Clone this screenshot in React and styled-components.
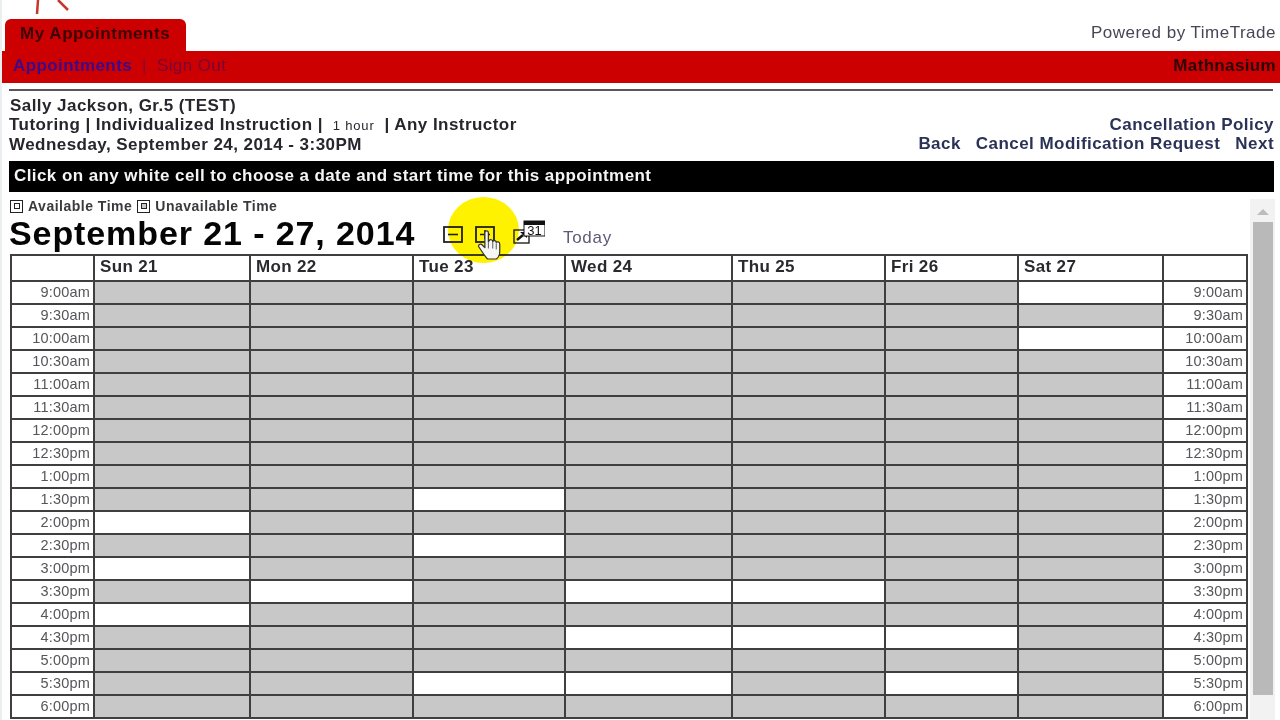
import React from 'react';
import styled, { createGlobalStyle } from 'styled-components';

const Global = createGlobalStyle`
  html, body { margin: 0; padding: 0; height: 720px; overflow: hidden; background: #fff; }
  body { font-family: "Liberation Sans", Arial, sans-serif; color: #111; }
`;
const Page = styled.div`
  position: relative; width: 1280px; height: 720px; overflow: hidden; background: #fff;
  border-left: 2px solid #eceff0; box-sizing: border-box;
`;
const Logo = styled.svg`position: absolute; left: 30px; top: 0; width: 45px; height: 18px;`;
const TopRow = styled.div`
  height: 51px; display: flex; align-items: flex-end; justify-content: space-between; padding-left: 3px; padding-right: 4px;
`;
const Tab = styled.div`
  width: 181px; height: 32px; box-sizing: border-box; background: #cc0000; border-radius: 6px 6px 0 0;
  padding: 5px 0 0 15px; font-size: 17px; font-weight: 700; letter-spacing: .55px; color: #3a0306;
`;
const Powered = styled.div`font-size: 17px; letter-spacing: .5px; color: #464656; padding-bottom: 8px;`;
const RedBar = styled.div`
  height: 32px; background: #cc0000; display: flex; align-items: center; justify-content: space-between; padding: 0 4px 3px 11px; box-sizing: border-box;
`;
const NavLinks = styled.div`display: flex; align-items: center; font-size: 17px; letter-spacing: .4px;`;
const NavLink = styled.span`color: ${p => p.$dim ? '#7c0338' : '#3c0a8a'}; font-weight: ${p => p.$dim ? 400 : 700};`;
const NavSep = styled.span`color: #8a0a30; font-weight: 400; margin: 0 10px;`;
const Org = styled.span`font-size: 17px; font-weight: 700; letter-spacing: .35px; color: #2c0308;`;
const Rule = styled.div`height: 2px; background: #58565c; margin: 6px 7px 0 7px;`;
const Info = styled.div`
  display: flex; justify-content: space-between; padding: 5px 6px 0 7px; height: 70px; box-sizing: border-box;
  font-size: 17px; letter-spacing: .45px; line-height: 19px; color: #26262c; font-weight: 700;
`;
const InfoLeft = styled.div`display: flex; flex-direction: column;`;
const InfoLine = styled.div`padding-left: ${p => p.$in || 0}px;`;
const Small = styled.span`font-size: 13px; font-weight: 400; letter-spacing: .8px; margin: 0 10px 0 10px;`;
const InfoRight = styled.div`display: flex; flex-direction: column; align-items: flex-end; padding-top: 19px; color: #2b3258;`;
const Actions = styled.div`display: flex; gap: 15px;`;
const Banner = styled.div`
  height: 31px; background: #000; color: #f4f4f4; margin: 0 6px 0 7px; padding: 0 5px 2px; display: flex; align-items: center; box-sizing: border-box;
  font-size: 17px; font-weight: 700; letter-spacing: .42px;
`;
const Content = styled.div`display: flex;`;
const Main = styled.div`width: 1238px; padding-left: 8px; flex: none;`;
const Legend = styled.div`
  display: flex; align-items: center; height: 14px; padding-top: 7px; font-size: 14px; font-weight: 700; letter-spacing: .5px; color: #3a3a3e;
`;
const LegendBox = styled.span`
  width: 13px; height: 13px; border: 1.5px solid #222; box-sizing: border-box; display: inline-flex; align-items: center; justify-content: center;
  margin-right: 5px; margin-left: ${p => p.$gap ? 5 : 0}px; background: #fff;
  &::after { content: ''; width: 6px; height: 6px; border: 1.5px solid #222; box-sizing: border-box; background: ${p => p.$gray ? '#c8c8c8' : '#fff'}; }
`;
const TitleRow = styled.div`display: flex; align-items: flex-end; height: 38px; margin-left: -1px;`;
const Title = styled.h1`
  margin: 0; font-size: 34px; line-height: 36px; font-weight: 700; letter-spacing: .9px; color: #050505; width: 434px; flex: none; white-space: nowrap;
`;
const ToolIcon = styled.svg`flex: none; display: block; margin-bottom: ${p => p.$bottom}px; margin-left: ${p => p.$left || 0}px;`;
const Today = styled.span`font-size: 17px; letter-spacing: .7px; color: #5e5a78; margin-left: 18px; margin-bottom: 3px;`;
const Grid = styled.div`
  display: grid; margin-top: 3px; width: 1238px; background: #3f3f3f; padding: 2px; gap: 2px; box-sizing: border-box;
  grid-template-columns: 81px 154px 161px 150px 165px 151px 131px 143px 82px;
  grid-template-rows: 24px; grid-auto-rows: 21px;
`;
const Head = styled.div`
  background: #fff; font-size: 17px; font-weight: 700; letter-spacing: .35px; line-height: 22px; color: #2a2a2e; padding-left: 5px; overflow: hidden;
`;
const TimeCell = styled.div`
  background: #fff; font-size: 14.5px; letter-spacing: .2px; line-height: 20px; text-align: right; color: #55555a; padding-right: 3px; white-space: nowrap;
`;
const Slot = styled.div`background: ${p => p.$open ? '#fff' : '#c8c8c8'};`;
const Scrollbar = styled.div`width: 25px; margin-left: 2px; margin-top: 7px; height: 521px; background: #f2f2f2; display: flex; flex-direction: column; align-items: center; padding-top: 10px; box-sizing: border-box;`;
const ScrollArrow = styled.div`width: 0; height: 0; border-left: 6px solid transparent; border-right: 6px solid transparent; border-bottom: 6px solid #bcbcbc;`;
const Thumb = styled.div`width: 20px; height: 473px; background: #b9b9b9; margin-top: 7px;`;
const Spot = styled.div`position: absolute; left: 446px; top: 197px; width: 71px; height: 66px; border-radius: 50%; background: #fff200; mix-blend-mode: multiply;`;
const Hand = styled.svg`position: absolute; left: 475px; top: 230px; width: 28px; height: 30px;`;

const times = ['9:00am','9:30am','10:00am','10:30am','11:00am','11:30am','12:00pm','12:30pm','1:00pm','1:30pm','2:00pm','2:30pm','3:00pm','3:30pm','4:00pm','4:30pm','5:00pm','5:30pm','6:00pm'];
const days = ['Sun 21','Mon 22','Tue 23','Wed 24','Thu 25','Fri 26','Sat 27'];
const open = [
  ['2:00pm','3:00pm','4:00pm'],
  ['3:30pm'],
  ['1:30pm','2:30pm','5:30pm'],
  ['3:30pm','4:30pm','5:30pm'],
  ['3:30pm','4:30pm'],
  ['4:30pm','5:30pm'],
  ['9:00am','10:00am'],
];

export default function App() {
  return (
    <Page>
      <Global />
      <Logo viewBox="0 0 45 18"><path d="M6 0 L5 14 M26 0 L36 10" stroke="#c8352a" strokeWidth="2.5" fill="none" /></Logo>
      <TopRow>
        <Tab>My Appointments</Tab>
        <Powered>Powered by TimeTrade</Powered>
      </TopRow>
      <RedBar>
        <NavLinks><NavLink>Appointments</NavLink><NavSep>|</NavSep><NavLink $dim>Sign Out</NavLink></NavLinks>
        <Org>Mathnasium</Org>
      </RedBar>
      <Rule />
      <Info>
        <InfoLeft>
          <InfoLine $in={1}>Sally Jackson, Gr.5 (TEST)</InfoLine>
          <InfoLine>Tutoring | Individualized Instruction |<Small>1 hour</Small>| Any Instructor</InfoLine>
          <InfoLine>Wednesday, September 24, 2014 - 3:30PM</InfoLine>
        </InfoLeft>
        <InfoRight>
          <div>Cancellation Policy</div>
          <Actions><span>Back</span><span>Cancel Modification Request</span><span>Next</span></Actions>
        </InfoRight>
      </Info>
      <Banner>Click on any white cell to choose a date and start time for this appointment</Banner>
      <Content>
        <Main>
          <Legend><LegendBox />Available Time<LegendBox $gap $gray />Unavailable Time</Legend>
          <TitleRow>
            <Title>September 21 - 27, 2014</Title>
            <ToolIcon $bottom={8} width="20" height="17" viewBox="0 0 20 17"><rect x="1" y="1" width="18" height="15" fill="none" stroke="#222" strokeWidth="1.8" /><path d="M5 8.5h10" stroke="#222" strokeWidth="1.6" /></ToolIcon>
            <ToolIcon $bottom={8} $left={12} width="20" height="17" viewBox="0 0 20 17"><rect x="1" y="1" width="18" height="15" fill="none" stroke="#222" strokeWidth="1.8" /><path d="M5 8.5h10M10 4v9" stroke="#222" strokeWidth="1.6" /></ToolIcon>
            <ToolIcon $bottom={7} $left={18} width="32" height="24" viewBox="0 0 32 24">
              <rect x="1" y="10" width="15" height="13" fill="#fff" stroke="#222" strokeWidth="1.4" />
              <path d="M4 20l6-5" stroke="#111" strokeWidth="2.4" fill="none" />
              <path d="M7 12h7v6z" fill="#111" />
              <rect x="11" y="1" width="21" height="15" fill="#fff" stroke="#111" />
              <rect x="11" y="1" width="21" height="4" fill="#111" />
              <text x="21.5" y="15" fontSize="13" textAnchor="middle" fontFamily="Liberation Sans" fill="#111">31</text>
            </ToolIcon>
            <Today>Today</Today>
          </TitleRow>
          <Grid>
            <Head />
            {days.map(d => <Head key={d}>{d}</Head>)}
            <Head />
            {times.map(t => (
              <React.Fragment key={t}>
                <TimeCell>{t}</TimeCell>
                {open.map((o, i) => <Slot key={i} $open={o.includes(t)} />)}
                <TimeCell>{t}</TimeCell>
              </React.Fragment>
            ))}
          </Grid>
        </Main>
        <Scrollbar><ScrollArrow /><Thumb /></Scrollbar>
      </Content>
      <Spot />
      <Hand viewBox="0 0 32 34">
        <path d="M9 3c0-3 4-3 4 0v10l1-1c1-2 4-1 4 1 1-2 4-1 4 1 1-1 4-1 4 2v8c0 4-2 8-4 9H12c-2-2-4-5-6-8l-4-6c-1-2 2-4 4-2l3 3z" fill="#f6f6f6" stroke="#333" strokeWidth="1.4" strokeLinejoin="round" />
        <path d="M13 13v8M18 13v8M22 15v7" stroke="#444" strokeWidth="1" />
      </Hand>
    </Page>
  );
}
